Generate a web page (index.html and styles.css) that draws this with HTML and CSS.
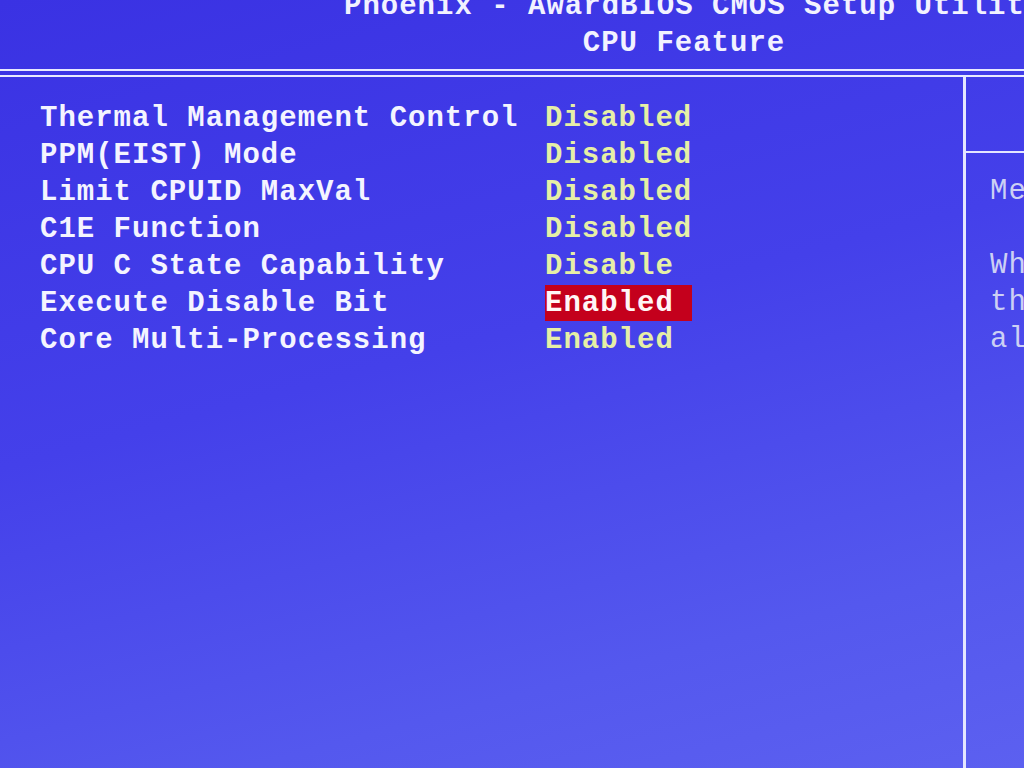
FILE: index.html
```html
<!DOCTYPE html>
<html lang="en">
<head>
  <meta charset="UTF-8" />
  <title>CPU Feature</title>
  <link rel="stylesheet" href="styles.css">
</head>
<body>
  <div class="screen">
    <div class="header">
      <div class="title">Phoenix - AwardBIOS CMOS Setup Utility</div>
      <div class="title">CPU Feature</div>
    </div>
    <div class="rule"></div>

    <div class="main">
      <div class="items">
        <div class="row"><span class="label">Thermal Management Control</span><span class="value">Disabled</span></div>
        <div class="row"><span class="label">PPM(EIST) Mode</span><span class="value">Disabled</span></div>
        <div class="row"><span class="label">Limit CPUID MaxVal</span><span class="value">Disabled</span></div>
        <div class="row"><span class="label">C1E Function</span><span class="value">Disabled</span></div>
        <div class="row"><span class="label">CPU C State Capability</span><span class="value">Disable</span></div>
        <div class="row"><span class="label">Execute Disable Bit</span><span class="value selected">Enabled</span></div>
        <div class="row"><span class="label">Core Multi-Processing</span><span class="value">Enabled</span></div>
      </div>

      <div class="help">
        <div class="help-top"></div>
        <div class="help-body">
          <div class="help-line">Menu Level &#9658;</div>
          <div class="help-line">&nbsp;</div>
          <div class="help-line">When disabled, force</div>
          <div class="help-line">the XD feature flag</div>
          <div class="help-line">always return 0</div>
        </div>
      </div>
    </div>
  </div>
</body>
</html>
```

FILE: styles.css
```css
body {
  margin: 0;
  overflow: hidden;
  background: #4040ea;
}

.screen {
  width: 1024px;
  height: 768px;
  overflow: hidden;
  display: flex;
  flex-direction: column;
  font-family: "Liberation Mono", "DejaVu Sans Mono", monospace;
  font-weight: bold;
  font-size: 29px;
  letter-spacing: 1px;
  background: linear-gradient(165deg, #3a32e3 0%, #4440ea 45%, #5458ee 80%, #5c60f0 100%);
}

.header {
  margin-top: -12px;
  padding-left: 344px;
  text-align: center;
  white-space: nowrap;
  color: #f2f2ff;
  line-height: 37px;
}

.rule {
  height: 4px;
  margin-top: 7px;
  border-top: 2px solid #e8eaff;
  border-bottom: 2px solid #e8eaff;
}

.main {
  flex: 1;
  display: flex;
}

.items {
  flex: 0 0 963px;
  padding-top: 23px;
}

.row {
  display: flex;
  height: 37px;
  line-height: 37px;
  padding-left: 40px;
  white-space: nowrap;
}

.label {
  width: 505px;
  color: #f4f4ff;
}

.value {
  color: #e6efa6;
}

.selected {
  width: 147px;
  height: 36px;
  background: #c4001c;
  color: #fff6f6;
}

.help {
  flex: 1;
  border-left: 3px solid #e4e6ff;
  display: flex;
  flex-direction: column;
  white-space: nowrap;
  overflow: hidden;
}

.help-top {
  height: 74px;
  border-bottom: 2px solid #e4e6ff;
}

.help-body {
  padding: 20px 0 0 24px;
  color: #ccd0f4;
  font-weight: normal;
}

.help-line {
  height: 37px;
  line-height: 37px;
}
```
